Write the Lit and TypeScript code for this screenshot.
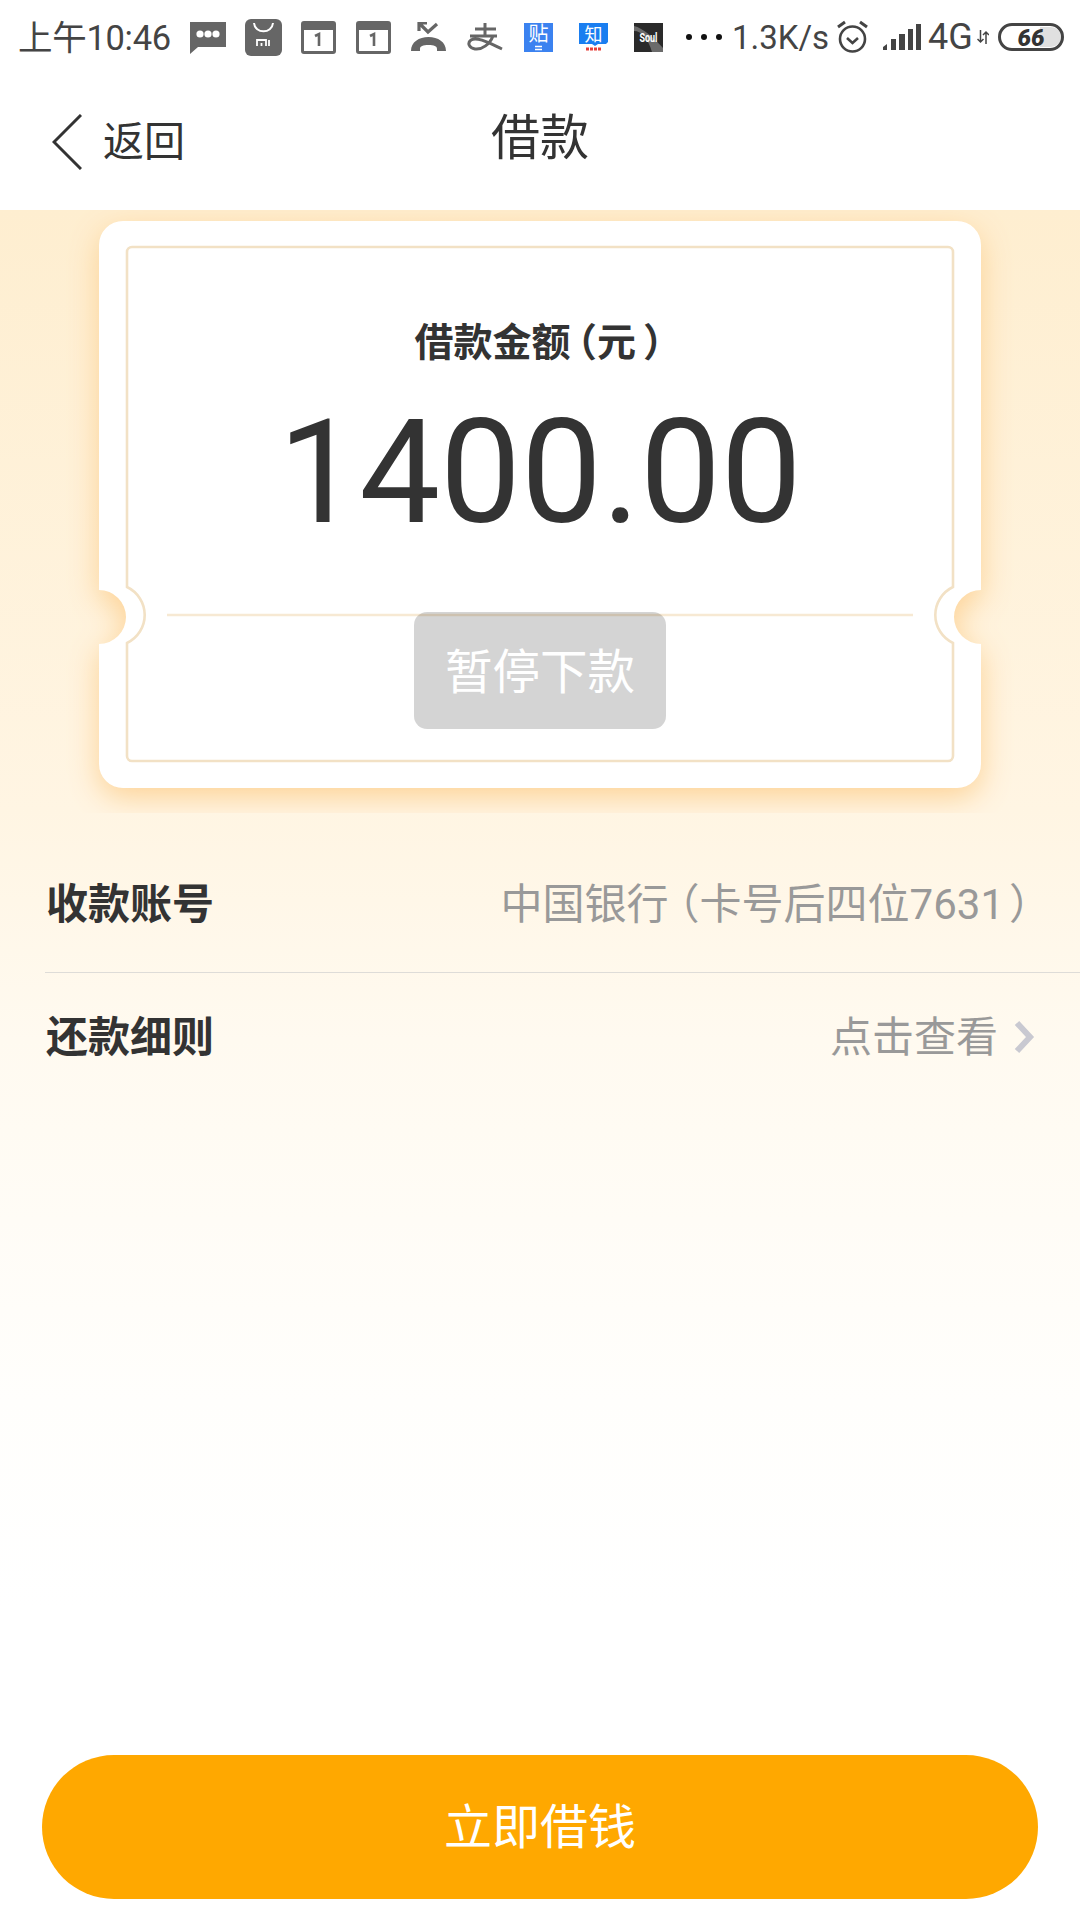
import { LitElement, html, css, svg } from 'lit';
import { customElement } from 'lit/decorators.js';

/**
 * Loan confirmation page.
 */
@customElement('app-root')
class AppRoot extends LitElement {
    static styles = css`
        :host {
            display: block;
            width: 1080px;
            height: 1920px;
            font-family: Roboto, "Noto Sans CJK SC", sans-serif;
            color: #333;
            background: #fff;
        }
        .page {
            display: flex;
            flex-direction: column;
            height: 100%;
        }
        .status {
            height: 60px;
            display: flex;
            align-items: center;
            color: #444;
            padding-left: 18px;
            padding-top: 14px;
            box-sizing: border-box;
            flex: none;
        }
        .status svg { display: block; flex: none; }
        .clock { font-size: 34.5px; width: 172px; margin-top: -4px; letter-spacing: -0.3px; white-space: nowrap; }
        .speed { font-size: 33px; width: 104px; margin-left: 10px; white-space: nowrap; }
        .net { font-size: 36px; margin-left: 7px; width: 49px; }
        .icon-text { font-family: "Noto Sans CJK SC", sans-serif; }
        .soul-text { font-family: Roboto, sans-serif; font-weight: 700; }
        .bat-text { font-family: Roboto, sans-serif; font-weight: 900; font-style: italic; }
        .m-msg { margin-left: 0; }
        .m-mi { margin-left: 19px; }
        .m-cal { margin-left: 19px; }
        .m-cal2 { margin-left: 20px; }
        .m-call { margin-left: 20px; }
        .m-ali { margin-left: 21px; }
        .m-tie { margin-left: 21px; margin-top: -5px; }
        .m-zhi { margin-left: 26px; margin-top: -5px; }
        .m-soul { margin-left: 26px; }
        .m-dots { margin-left: 23px; }
        .m-alarm { margin-left: 0; }
        .m-sig { margin-left: 14px; }
        .m-arrow { margin-left: 0; }
        .m-bat { margin-left: 9px; }

        .header {
            height: 150px;
            flex: none;
            display: grid;
            grid-template-columns: 1fr auto 1fr;
            align-items: center;
            padding-bottom: 4px;
            box-sizing: border-box;
        }
        .back {
            display: flex;
            align-items: center;
            font-size: 41px;
            padding-left: 52px;
            gap: 21px;
            margin-top: 10px;
        }
        .back svg { display: block; margin-top: 8px; }
        .title { font-size: 49px; }

        .main {
            flex: 1;
            display: flex;
            flex-direction: column;
            background: linear-gradient(180deg, #feeed0 0, #fff5e3 600px, #fffaf0 830px, #fffefc 1190px, #fff 1400px);
        }
        .ticket {
            display: grid;
            height: 603px;
            overflow: hidden;
            flex: none;
        }
        .ticket > * { grid-area: 1 / 1; }
        .ticket svg { display: block; }
        .ticket-shape { filter: drop-shadow(0 9px 15px #fdd295); }
        .ticket-body {
            display: flex;
            flex-direction: column;
            align-items: center;
            padding-top: 108px;
        }
        .amount-label {
            font-size: 39px;
            font-weight: 700;
            line-height: 50px;
            padding-right: 3px;
        }
        /* half width brackets, the reference font sets them narrow */
        .open, .close { font-feature-settings: "halt"; }
        .open { margin-left: 7px; }
        .close { margin-left: 7px; }
        .amount {
            font-size: 144px;
            line-height: 150px;
            margin-top: 30px;
        }
        .pause {
            width: 252px;
            height: 117px;
            margin-top: 64px;
            padding-bottom: 4px;
            box-sizing: border-box;
            border-radius: 13px;
            background: rgba(0, 0, 0, 0.17);
            color: #fff;
            font-size: 47.5px;
            display: flex;
            align-items: center;
            justify-content: center;
        }
        .rows {
            margin-top: 23px;
            margin-left: 45px;
        }
        .row {
            height: 136px;
            display: flex;
            align-items: center;
            justify-content: space-between;
            padding-right: 45px;
            padding-bottom: 8px;
            box-sizing: border-box;
        }
        .row + .row {
            border-top: 1px solid #dedcd8;
            padding-bottom: 14px;
        }
        .row-label {
            font-size: 42px;
            font-weight: 700;
            padding-left: 1px;
        }
        .row-value {
            font-size: 42px;
            color: #999;
            display: flex;
            align-items: center;
            gap: 15px;
        }
        .row-value svg { margin-top: 6px; }
        .account {
            display: block;
            margin-right: 5px;
            white-space: nowrap;
        }
        .account .open { margin-left: 10px; }
        .account .close { margin-left: 5px; }
        .submit {
            margin: auto 42px 21px;
            height: 144px;
            padding-bottom: 8px;
            box-sizing: border-box;
            border-radius: 72px;
            background: #ffa800;
            color: #fff;
            font-size: 48px;
            display: flex;
            align-items: center;
            justify-content: center;
        }
    `;

    calendarIcon(cls: string) {
        return html`<svg class=${cls} width="35" height="33" viewBox="0 0 35 33">
            <rect x="1.5" y="1.5" width="32" height="30" rx="1.5" fill="#fff" stroke="#666" stroke-width="3"/>
            <rect x="1" y="1" width="33" height="8" fill="#666"/>
            <path d="M14 15l4-2v12" fill="none" stroke="#666" stroke-width="2.6"/>
        </svg>`;
    }

    statusBar() {
        return html`<div class="status">
            <span class="clock">上午10:46</span>
            <svg class="m-msg" width="36" height="33" viewBox="0 0 36 33">
                <path d="M0 1h36v25H8l-8 7z" fill="#666"/>
                <circle cx="10" cy="13" r="3.6" fill="#fff"/>
                <circle cx="18" cy="13" r="3.6" fill="#fff"/>
                <circle cx="26" cy="13" r="3.6" fill="#fff"/>
            </svg>
            <svg class="m-mi" width="37" height="37" viewBox="0 0 37 37">
                <rect width="37" height="37" rx="6" fill="#666"/>
                <path d="M9 4c1 11 18 11 19 0" fill="none" stroke="#fff" stroke-width="2"/>
                <path d="M12 27v-6h9v6M16.500 24v3M24 21v6" fill="none" stroke="#fff" stroke-width="1.800"/>
            </svg>
            ${this.calendarIcon('m-cal')}
            ${this.calendarIcon('m-cal2')}
            <svg class="m-call" width="35" height="30" viewBox="0 0 35 30">
                <path d="M0 29C0 20 8 15 17.500 15S35 20 35 29H26V27C26 24 23 23 17.500 23S9 24 9 27V29Z" fill="#666"/>
                <path d="M26 2l-9 8-8-8M8 9V1h8" fill="none" stroke="#666" stroke-width="3.200"/>
            </svg>
            <svg class="m-ali" width="36" height="28" viewBox="0 0 36 28">
                <path d="M8 6h21M18 0v13M3 13h27M26 13c-3 8-11 14-18 13-6-1-8-6-4-9 6-4 20 4 31 9" fill="none" stroke="#666" stroke-width="3"/>
            </svg>
            <svg class="m-tie" width="29" height="34" viewBox="0 -5 29 34">
                <rect y="0" width="29" height="29" fill="#3b82f0"/>
                <text class="icon-text" x="14.500" y="18" font-size="20" fill="#fff" text-anchor="middle">贴</text>
                <path d="M11 23.500h7M11 26.500h7" stroke="#fff" stroke-width="1.400"/>
            </svg>
            <svg class="m-zhi" width="29" height="34" viewBox="0 -5 29 34">
                <path d="M0 0h29v19l-2 2H19l-3 2-3-2H0z" fill="#1a7ef0"/>
                <text class="icon-text" x="14.500" y="18" font-size="18" fill="#fff" text-anchor="middle">知</text>
                <path d="M7 26h15" stroke="#e8403a" stroke-width="3" stroke-dasharray="3 1"/>
            </svg>
            <svg class="m-soul" width="29" height="29" viewBox="0 0 29 29">
                <rect width="29" height="29" fill="#2a2a2a"/>
                <path d="M0 3c9 2 20 12 29 22v4H18C14 16 8 8 0 8z" fill="#6b6b6b"/>
                <text class="soul-text" x="14.500" y="19" font-size="12" fill="#fff" text-anchor="middle" textLength="18" lengthAdjust="spacingAndGlyphs">Soul</text>
            </svg>
            <svg class="m-dots" width="36" height="8" viewBox="0 0 36 8">
                <circle cx="3" cy="4" r="3" fill="#111"/>
                <circle cx="18" cy="4" r="3" fill="#111"/>
                <circle cx="33" cy="4" r="3" fill="#111"/>
            </svg>
            <span class="speed">1.3K/s</span>
            <svg class="m-alarm" width="33" height="34" viewBox="0 0 33 34">
                <circle cx="16.500" cy="19" r="12.500" fill="none" stroke="#444" stroke-width="2.600"/>
                <path d="M11 18l5.500 5 5.500-5" fill="none" stroke="#444" stroke-width="2.600"/>
                <path d="M2 7l7-5M31 7l-7-5" fill="none" stroke="#444" stroke-width="3"/>
            </svg>
            <svg class="m-sig" width="38" height="26" viewBox="0 0 38 26">
                <path d="M0 26v-3l4-3v6zM8 26V15h5v11zM16 26V10h6v16zM25 26V5h5v21zM33 26V0h5v26z" fill="#444"/>
            </svg>
            <span class="net">4G</span>
            <svg class="m-arrow" width="12" height="14" viewBox="0 0 12 14">
                <path d="M3.500 0v12M0.500 9l3 3 3-3M9 14V2M6 5l3-3 3 3" fill="none" stroke="#444" stroke-width="1.500"/>
            </svg>
            <svg class="m-bat" width="66" height="28" viewBox="0 0 66 28">
                <path d="M42 4h11a10 10 0 0 1 0 20H42z" fill="#e0e0e0"/>
                <rect x="1.500" y="1.500" width="63" height="25" rx="12.500" fill="none" stroke="#444" stroke-width="3"/>
                <text class="bat-text" x="33" y="22.500" font-size="24" fill="#333" text-anchor="middle">66</text>
            </svg>
        </div>`;
    }

    ticketShape() {
        return svg`
            <path class="ticket-shape" fill="#fff" d="M123 11H957a24 24 0 0 1 24 24V380a27 27 0 0 0 0 54V554a24 24 0 0 1-24 24H123a24 24 0 0 1-24-24V434a27 27 0 0 0 0-54V35a24 24 0 0 1 24-24Z"/>
            <path fill="none" stroke="#f2e1c5" stroke-width="2.600" d="M132 37H948a5 5 0 0 1 5 5V377A31 31 0 0 0 953 433V546a5 5 0 0 1-5 5H132a5 5 0 0 1-5-5V433A31 31 0 0 0 127 377V42a5 5 0 0 1 5-5Z"/>
            <path fill="none" stroke="#f7e9d3" stroke-width="2.500" d="M167 405H913"/>
        `;
    }

    render() {
        return html`
            <div class="page">
                ${this.statusBar()}
                <div class="header">
                    <div class="back">
                        <svg width="30" height="56" viewBox="0 0 30 56">
                            <path d="M29 1L2 28l27 27" fill="none" stroke="#333" stroke-width="3"/>
                        </svg>
                        <span>返回</span>
                    </div>
                    <div class="title">借款</div>
                </div>
                <div class="main">
                    <div class="ticket">
                        <svg width="1080" height="603" viewBox="0 0 1080 603">${this.ticketShape()}</svg>
                        <div class="ticket-body">
                            <div class="amount-label">借款金额<span class="open">（</span>元<span class="close">）</span></div>
                            <div class="amount">1400.00</div>
                            <div class="pause">暂停下款</div>
                        </div>
                    </div>
                    <div class="rows">
                        <div class="row">
                            <span class="row-label">收款账号</span>
                            <span class="row-value account">中国银行<span class="open">（</span>卡号后四位7631<span class="close">）</span></span>
                        </div>
                        <div class="row">
                            <span class="row-label">还款细则</span>
                            <span class="row-value">点击查看
                                <svg width="22" height="34" viewBox="0 0 22 34">
                                    <path d="M4 3l13 14L4 31" fill="none" stroke="#c9c9d1" stroke-width="6"/>
                                </svg>
                            </span>
                        </div>
                    </div>
                    <div class="submit">立即借钱</div>
                </div>
            </div>
        `;
    }
}

declare global {
    interface HTMLElementTagNameMap {
        'app-root': AppRoot;
    }
}
